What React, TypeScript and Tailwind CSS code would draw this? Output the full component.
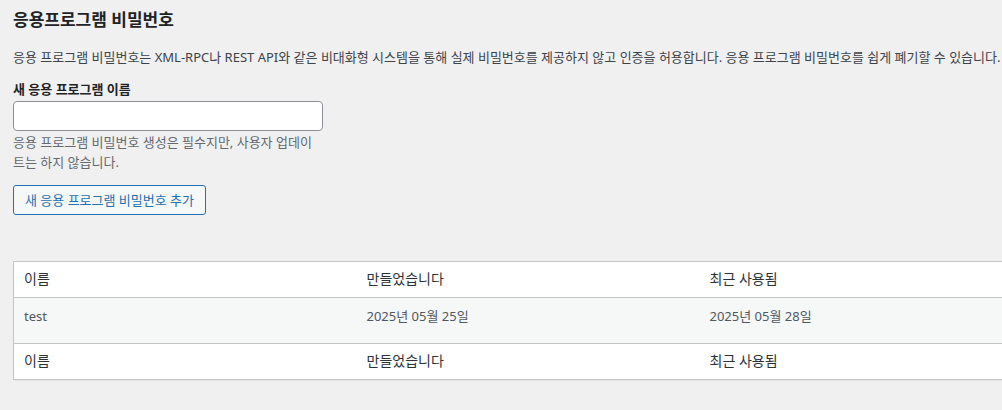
import React from "react";

const font = { fontFamily: '"Noto Sans", "Noto Sans CJK KR", sans-serif' };

export default function App() {
  return (
    <div
      className="w-[1002px] h-[410px] overflow-hidden bg-[#f0f0f1] text-[#3c434a] text-[13px]"
      style={font}
    >
      <div className="pl-[13px] pt-[6px]">
        <h2 className="text-[17px] font-semibold text-[#1d2327] leading-[28px]">응용프로그램 비밀번호</h2>
        <p className="mt-[13px] leading-[20px] whitespace-nowrap text-[#3c434a]">
          응용 프로그램 비밀번호는 XML-RPC나 REST API와 같은 비대화형 시스템을 통해 실제 비밀번호를 제공하지 않고 인증을 허용합니다. 응용 프로그램 비밀번호를 쉽게 폐기할 수 있습니다.
        </p>
        <label className="block mt-[12px] font-semibold text-[#1d2327] leading-[20px]">새 응용 프로그램 이름</label>
        <input
          type="text"
          className="block mt-[2px] w-[310px] h-[30px] bg-white border border-[#8c8f94] rounded-[4px] px-2 outline-none"
        />
        <p className="mt-[2px] w-[320px] leading-[19px] text-[#646970] whitespace-nowrap">
          응용 프로그램 비밀번호 생성은 필수지만, 사용자 업데이
          <br />
          <span className="inline-block mt-[1px]">트는 하지 않습니다.</span>
        </p>
        <button className="mt-[13px] h-[30px] px-[11px] border border-[#2271b1] rounded-[3px] bg-[#f6f7f7] text-[#2271b1] text-[13px] leading-[28px]">
          새 응용 프로그램 비밀번호 추가
        </button>
        <div className="mt-[46px] w-[1500px]">
          <table className="table-fixed w-[1400px] bg-white border border-[#c3c4c7] shadow-[0_1px_1px_rgba(0,0,0,0.04)]">
            <colgroup>
              <col className="w-[343px]" />
              <col className="w-[343px]" />
              <col className="w-[343px]" />
              <col />
            </colgroup>
            <thead>
              <tr className="border-b border-[#c3c4c7] h-[36px]">
                <th className="text-left font-normal text-[14px] text-[#2c3338] px-[10px] pb-[2px] align-middle">이름</th>
                <th className="text-left font-normal text-[14px] text-[#2c3338] px-[10px] pb-[2px] align-middle">만들었습니다</th>
                <th className="text-left font-normal text-[14px] text-[#2c3338] px-[10px] pb-[2px] align-middle">최근 사용됨</th>
                <th className="px-[10px]"></th>
              </tr>
            </thead>
            <tbody>
              <tr className="bg-[#f6f7f7] h-[46px]">
                <td className="px-[10px] pt-[8px] align-top leading-[20px] text-[#50575e]">test</td>
                <td className="px-[10px] pt-[8px] align-top leading-[20px] text-[#50575e]">2025년 05월 25일</td>
                <td className="px-[10px] pt-[8px] align-top leading-[20px] text-[#50575e]">2025년 05월 28일</td>
                <td className="px-[10px] pt-[8px] align-top leading-[20px] text-[#50575e]"></td>
              </tr>
            </tbody>
            <tfoot>
              <tr className="border-t border-[#c3c4c7] h-[36px]">
                <th className="text-left font-normal text-[14px] text-[#2c3338] px-[10px] pb-[2px] align-middle">이름</th>
                <th className="text-left font-normal text-[14px] text-[#2c3338] px-[10px] pb-[2px] align-middle">만들었습니다</th>
                <th className="text-left font-normal text-[14px] text-[#2c3338] px-[10px] pb-[2px] align-middle">최근 사용됨</th>
                <th className="px-[10px]"></th>
              </tr>
            </tfoot>
          </table>
        </div>
      </div>
    </div>
  );
}
